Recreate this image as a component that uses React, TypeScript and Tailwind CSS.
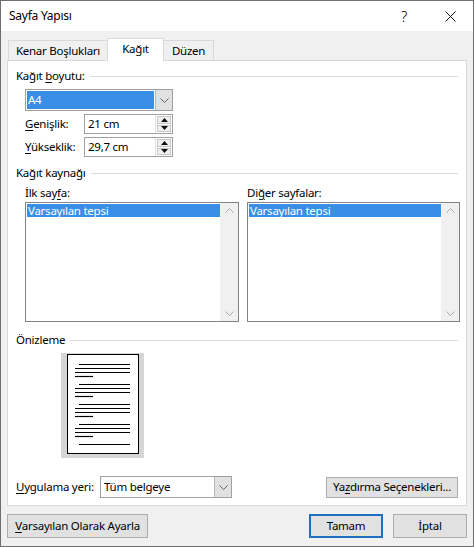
import React from 'react';

const font = { fontFamily: '"Noto Sans", "Segoe UI", Arial, sans-serif' };

const U = ({ children }: { children: React.ReactNode }) => (
  <span className="underline underline-offset-2 decoration-1">{children}</span>
);

const ChevronDown = ({ color = '#555' }: { color?: string }) => (
  <svg width="9" height="5" viewBox="0 0 9 5">
    <polyline points="0.5,0.5 4.5,4.5 8.5,0.5" fill="none" stroke={color} strokeWidth="1" />
  </svg>
);

const ChevronUp = ({ color = '#555' }: { color?: string }) => (
  <svg width="9" height="5" viewBox="0 0 9 5">
    <polyline points="0.5,4.5 4.5,0.5 8.5,4.5" fill="none" stroke={color} strokeWidth="1" />
  </svg>
);

const SectionTitle = ({ children }: { children: React.ReactNode }) => (
  <div className="flex items-center h-4 pr-[8px]">
    <span className="whitespace-nowrap">{children}</span>
    <div className="flex-1 h-px bg-[#dcdcdc] ml-[5px]" />
  </div>
);

const Spinner = () => (
  <div className="w-[17px] flex flex-col h-full border-l border-[#e0e0e0]">
    <div className="flex-1 flex items-center justify-center bg-[#f0f0f0] border border-[#c8c8c8] m-px mb-0">
      <svg width="7" height="4" viewBox="0 0 7 4"><polygon points="0,4 3.5,0 7,4" fill="#111" /></svg>
    </div>
    <div className="flex-1 flex items-center justify-center bg-[#f0f0f0] border border-[#c8c8c8] m-px">
      <svg width="7" height="4" viewBox="0 0 7 4"><polygon points="0,0 3.5,4 7,0" fill="#111" /></svg>
    </div>
  </div>
);

const ListBox = ({ width }: { width: string }) => (
  <div className={`${width} h-[120px] border border-[#828282] bg-white flex`}>
    <div className="flex-1 pt-[1px] pl-[1px]">
      <div className="h-[13px] bg-[#3a8ee6] text-white leading-[13px] pl-[1px]">Varsayılan tepsi</div>
    </div>
    <div className="w-[18px] bg-[#f0f0f0] flex flex-col justify-between items-center py-[5px]">
      <ChevronUp color="#a8a8a8" />
      <ChevronDown color="#a8a8a8" />
    </div>
  </div>
);

const Preview = () => {
  const groups = [0, 20, 40, 60];
  return (
    <svg width="83" height="105" viewBox="0 0 83 105">
      <rect x="0" y="0" width="83" height="105" fill="#d6d6d6" />
      <rect x="6.5" y="1.5" width="71" height="99" fill="#fff" stroke="#000" strokeWidth="1" />
      {groups.map((g) => (
        <g key={g} stroke="#000" strokeWidth="1.2">
          <line x1="18" x2="69" y1={11.5 + g} y2={11.5 + g} />
          <line x1="14" x2="69" y1={15.5 + g} y2={15.5 + g} />
          <line x1="14" x2="69" y1={19.5 + g} y2={19.5 + g} />
          <line x1="14" x2="32" y1={23.5 + g} y2={23.5 + g} />
        </g>
      ))}
      <line x1="18" x2="69" y1="91.5" y2="91.5" stroke="#000" strokeWidth="1.2" />
    </svg>
  );
};

export default function App() {
  return (
    <div
      style={font}
      className="w-[474px] h-[547px] border border-[#6e6e6e] flex flex-col text-[11.5px] tracking-[-0.25px] whitespace-nowrap text-black bg-[#f0f0f0] overflow-hidden"
    >
      {/* Title bar */}
      <div className="h-[30px] bg-white flex items-center pl-[8px]">
        <span className="flex-1 text-[12px]">Sayfa Yapısı</span>
        <span className="w-[46px] text-center text-[15px] font-light">?</span>
        <div className="w-[46px] flex justify-center">
          <svg width="11" height="11" viewBox="0 0 11 11">
            <line x1="0.5" y1="0.5" x2="10.5" y2="10.5" stroke="#111" strokeWidth="1" />
            <line x1="10.5" y1="0.5" x2="0.5" y2="10.5" stroke="#111" strokeWidth="1" />
          </svg>
        </div>
      </div>

      <div className="flex-1 flex flex-col px-[6px]">
        {/* Tabs */}
        <div className="h-[29px] flex items-end pl-[1px]">
          <div className="h-[20px] w-[100px] border border-b-0 border-[#d9d9d9] flex items-center justify-center">
            Kenar Boşlukları
          </div>
          <div className="h-[23px] w-[57px] -ml-px -mb-px border border-b-0 border-[#d9d9d9] bg-white flex items-center justify-center relative z-10 pb-[2px]">
            Kağıt
          </div>
          <div className="h-[20px] w-[51px] -ml-px border border-b-0 border-[#d9d9d9] flex items-center justify-center">
            Düzen
          </div>
        </div>

        {/* Panel */}
        <div className="h-[446px] border border-[#d9d9d9] bg-white flex flex-col pl-[8px] pt-[7px]">
          <SectionTitle>
            Kağıt <U>b</U>oyutu:
          </SectionTitle>

          <div className="ml-[9px] mt-[5px] w-[148px] h-[22px] border border-[#a0a0a0] flex">
            <div className="flex-1 p-px">
              <div className="h-full bg-[#3a8ee6] text-white flex items-center pl-[1px]">A4</div>
            </div>
            <div className="w-[17px] bg-[#e1e1e1] border-l border-[#b8b8b8] flex items-center justify-center">
              <ChevronDown color="#606060" />
            </div>
          </div>

          <div className="ml-[9px] mt-[3px] flex items-center h-[20px]">
            <span className="w-[59px]"><U>G</U>enişlik:</span>
            <div className="w-[89px] h-full border border-[#a0a0a0] flex">
              <div className="flex-1 flex items-center pl-[3px]">21 cm</div>
              <Spinner />
            </div>
          </div>

          <div className="ml-[9px] mt-[3px] flex items-center h-[20px]">
            <span className="w-[59px]"><U>Y</U>ükseklik:</span>
            <div className="w-[89px] h-full border border-[#a0a0a0] flex">
              <div className="flex-1 flex items-center pl-[3px]">29,7 cm</div>
              <Spinner />
            </div>
          </div>

          <div className="mt-[8px]">
            <SectionTitle>Kağıt kaynağı</SectionTitle>
          </div>

          <div className="ml-[9px] mt-[4px] flex gap-[8px]">
            <div className="flex flex-col">
              <span className="h-4 leading-4">İlk say<U>f</U>a:</span>
              <div className="mt-[1px]">
                <ListBox width="w-[214px]" />
              </div>
            </div>
            <div className="flex flex-col">
              <span className="h-4 leading-4">Di<U>ğ</U>er sayfalar:</span>
              <div className="mt-[1px]">
                <ListBox width="w-[213px]" />
              </div>
            </div>
          </div>

          <div className="mt-[10px]">
            <SectionTitle>Önizleme</SectionTitle>
          </div>

          <div className="ml-[45px] mt-[5px]">
            <Preview />
          </div>

          <div className="mt-[18px] flex items-center pr-[8px]">
            <span className="w-[84px]"><U>U</U>ygulama yeri:</span>
            <div className="w-[132px] h-[22px] border border-[#a0a0a0] flex">
              <div className="flex-1 flex items-center pl-[3px]">Tüm belgeye</div>
              <div className="w-[17px] bg-[#e1e1e1] border-l border-[#b8b8b8] flex items-center justify-center">
                <ChevronDown color="#606060" />
              </div>
            </div>
            <div className="flex-1" />
            <button className="w-[132px] h-[21px] bg-[#e1e1e1] border border-[#adadad] flex items-center justify-center">
              Ya<U>z</U>dırma Seçenekleri...
            </button>
          </div>
        </div>

        {/* Bottom buttons */}
        <div className="mt-[8px] flex items-center h-[24px]">
          <button className="w-[141px] h-full bg-[#e1e1e1] border border-[#adadad] flex items-center justify-center">
            <U>V</U>arsayılan Olarak Ayarla
          </button>
          <div className="flex-1" />
          <button className="w-[74px] h-full bg-[#e1e1e1] border-2 border-[#1f6fc0] flex items-center justify-center">
            Tamam
          </button>
          <button className="ml-[10px] w-[74px] h-full bg-[#e1e1e1] border border-[#adadad] flex items-center justify-center">
            İptal
          </button>
        </div>
      </div>
    </div>
  );
}
